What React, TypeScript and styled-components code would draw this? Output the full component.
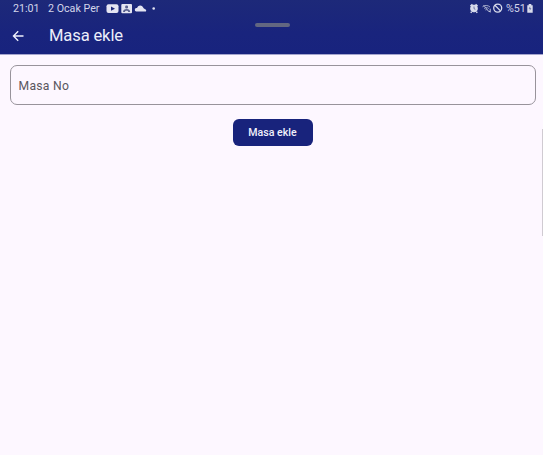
import React from "react";
import styled, { createGlobalStyle } from "styled-components";

const GlobalStyle = createGlobalStyle`
  * { box-sizing: border-box; }
  html, body { margin: 0; background: #fdf7ff; overflow: hidden; }
  body { font-family: Roboto, "Liberation Sans", sans-serif; }
`;

const Screen = styled.div`
  position: relative;
  display: flex;
  flex-direction: column;
  width: 543px;
  height: 455px;
  background: #fdf7ff;
`;

const Header = styled.header`
  position: relative;
  height: 54px;
  flex: none;
  background: linear-gradient(#1d2979, #19247d 60%, #18237e);
  box-shadow: 0 1px 0 #a5a5cd;
`;

const StatusBar = styled.div`
  display: flex;
  justify-content: space-between;
  height: 17px;
  padding: 0 9px 0 13px;
  color: #d3d6ea;
  font-size: 10.7px;
  line-height: 17px;
  white-space: pre;
`;

const StatusGroup = styled.div`
  display: flex;
  align-items: center;
`;

const Clock = styled.span`
  width: 35px;
`;

const DateText = styled.span`
  width: 58px;
`;

const Battery = styled.span`
  width: 20px;
  margin-left: 3px;
`;

const Icon = styled.svg`
  display: block;
  flex: none;
`;

const Handle = styled.div`
  position: absolute;
  top: 23px;
  left: 255px;
  width: 35px;
  height: 4px;
  border-radius: 2px;
  background: #626781;
`;

const AppBar = styled.div`
  display: flex;
  align-items: center;
  height: 38px;
  padding-left: 12px;
`;

const BackButton = styled.button`
  width: 37px;
  height: 12px;
  padding: 0;
  border: 0;
  background: none;
  color: #eef0fb;
`;

const Title = styled.h1`
  margin: 0;
  color: #eceefa;
  font-size: 16.6px;
  font-weight: 400;
  letter-spacing: -0.15px;
  line-height: 24px;
`;

const Form = styled.main`
  display: flex;
  flex-direction: column;
  align-items: center;
  gap: 14px;
  padding: 11px 7px 0 10px;
`;

const Field = styled.label`
  display: flex;
  align-items: center;
  width: 100%;
  height: 40px;
  padding: 1px 7.5px 0;
  border: 1px solid #98939b;
  border-radius: 7px;
  color: #5a565e;
  font-size: 12.2px;
  letter-spacing: 0.25px;
`;

const SubmitButton = styled.button`
  width: 80px;
  height: 27px;
  margin-right: 1px;
  padding: 0;
  border: 0;
  border-radius: 6px;
  background: #18237c;
  color: #f0f0fb;
  font-family: inherit;
  font-size: 10.6px;
  font-weight: 500;
  line-height: 27px;
`;

const EdgeHandle = styled.div`
  position: absolute;
  top: 129px;
  right: 0;
  width: 1px;
  height: 107px;
  background: #d0cbd2;
`;

export default function App() {
  return (
    <>
      <GlobalStyle />
      <Screen>
        <Header>
          <StatusBar>
            <StatusGroup>
              <Clock>21:01</Clock>
              <DateText>2 Ocak Per</DateText>
              <Icon width="52" height="17" viewBox="0 0 52 17" fill="#e4e5f2">
                <rect x="0.5" y="4.2" width="12" height="8.8" rx="2" />
                <path d="M5 6.5v4.3l4-2.1z" fill="#1c277b" />
                <rect x="15.3" y="4" width="10.7" height="9.3" rx="1" />
                <rect x="19.2" y="5.4" width="2.8" height="3" rx="1.2" fill="#59618f" />
                <path d="M17 12c0-2 1.5-3 3.6-3s3.6 1 3.6 3h-2c0-.8-.6-1.2-1.6-1.2s-1.6.4-1.6 1.2z" fill="#59618f" />
                <path d="M31.2 12a1.9 1.9 0 0 1 .1-3.7h.7a3.3 3.3 0 0 1 6.2-.3c.5 1 1.3 1.4 2 1.6.7.2 1 .7 1 1.2 0 .8-.5 1.2-1.2 1.2z" transform="translate(-1 -.4)" />
                <circle cx="47.7" cy="8.5" r="1.3" />
              </Icon>
            </StatusGroup>
            <StatusGroup>
              <Icon width="34" height="17" viewBox="0 0 34 17" fill="none" stroke="#d9dcec">
                <circle cx="5" cy="8.5" r="3.4" fill="#d9dcec" />
                <path d="M1.5 6.1l2-1.7M8.5 6.1l-2-1.7M2.7 11.7l-1 1M7.3 11.7l1 1" strokeWidth="1.6" />
                <path d="M5 6.5v2.2l1.3.6" stroke="#545c94" strokeWidth="0.8" />
                <path d="M13.5 6.8c2-1.8 5.3-1.8 7.5.2M15 8.5c1.4-1.2 3.3-1.2 4.7 0M16.3 10c.7-.5 1.5-.5 2.2 0M14.5 5l5.5 6.8" stroke="#a5abcb" strokeWidth="1" />
                <path d="M21.2 8.7v3.4M19.8 10.9l1.4 1.4" strokeWidth="0.9" />
                <circle cx="28.7" cy="8.1" r="4" strokeWidth="1.3" />
                <path d="M25.9 5.3l5.6 5.6" strokeWidth="1.3" />
              </Icon>
              <Battery>%51</Battery>
              <Icon width="8" height="17" viewBox="0 0 8 17">
                <path d="M2.7 4h2.6v1.2h1.4v7.6H1.3V5.2h1.4z" fill="#d9dcec" />
                <path d="M4.2 6.2L2.7 8.7h1.2l-.3 2L5.4 8.2H4.2z" fill="#626a9c" />
              </Icon>
            </StatusGroup>
          </StatusBar>
          <Handle />
          <AppBar>
            <BackButton aria-label="Geri">
              <Icon width="12" height="12" viewBox="0 0 12 12" fill="none" stroke="currentColor" strokeWidth="1.4">
                <path d="M11.5 6H1.6M6.2 1.3L1.5 6l4.7 4.7" />
              </Icon>
            </BackButton>
            <Title>Masa ekle</Title>
          </AppBar>
        </Header>
        <Form>
          <Field>Masa No</Field>
          <SubmitButton>Masa ekle</SubmitButton>
        </Form>
        <EdgeHandle />
      </Screen>
    </>
  );
}
